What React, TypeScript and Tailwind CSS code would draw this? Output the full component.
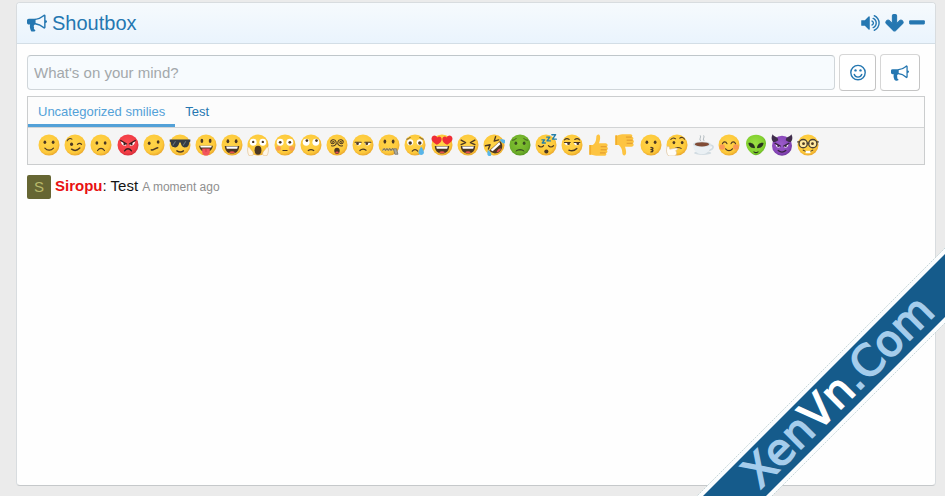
import { Fragment, type ReactNode } from "react";

/* ---------- interface icons ---------- */

const icons = {
  bullhorn: {
    box: "0 0 1792 1792",
    weight: 0,
    d: "M1664 640q53 0 90.5 37.5t37.5 90.5-37.5 90.5-90.5 37.5v384q0 52-38 90t-90 38q-417-347-812-380-58 19-91 66t-31 100.5 40 92.5q-20 33-23 65.5t6 58 33.5 55 48 50 61.5 50.5q-29 58-111.5 83t-168.5 11.5-132-55.5q-7-23-29.5-87.5t-32-94.5-23-89-15-101 3.5-98.5 22-110.5h-122q-66 0-113-47t-47-113v-192q0-66 47-113t113-47h480q435 0 896-384 52 0 90 38t38 90v384zm-128 604v-954q-394 302-768 343v270q377 42 768 341z",
  },
  volume: {
    box: "64 0 1664 1792",
    weight: 0,
    d: "M832 352v1088q0 26-19 45t-45 19-45-19l-333-333h-262q-26 0-45-19t-19-45v-384q0-26 19-45t45-19h262l333-333q19-19 45-19t45 19 19 45zm384 544q0 76-42.5 141.5t-112.5 93.5q-10 5-25 5-26 0-45-18.5t-19-45.5q0-21 12-35.5t29-25 34-23 29-36 12-56.5-12-56.5-29-36-34-23-29-25-12-35.5q0-27 19-45.5t45-18.5q15 0 25 5 70 27 112.5 93t42.5 142zm256 0q0 153-85 282.5t-225 188.5q-13 5-25 5-27 0-46-19t-19-45q0-39 39-59 56-29 76-44 74-54 115.5-135.5t41.5-173.5-41.5-173.5-115.5-135.5q-20-15-76-44-39-20-39-59 0-26 19-45t45-19q13 0 26 5 140 59 225 188.5t85 282.5zm256 0q0 230-127 422.5t-338 283.5q-13 5-26 5-26 0-45-19t-19-45q0-36 39-59 7-4 22.5-10.5t22.5-10.5q46-25 82-51 123-91 192-227t69-289-69-289-192-227q-36-26-82-51-7-4-22.5-10.5t-22.5-10.5q-39-23-39-59 0-26 19-45t45-19q13 0 26 5 211 91 338 283.5t127 422.5z",
  },
  down: {
    box: "64 0 1664 1792",
    weight: 90,
    d: "M1675 832q0 53-37 90l-651 652q-39 37-91 37-53 0-90-37l-651-652q-38-36-38-90 0-53 38-91l74-75q39-37 91-37 53 0 90 37l294 294v-704q0-52 38-90t90-38h128q52 0 90 38t38 90v704l294-294q37-37 90-37 52 0 91 37l75 75q37 39 37 91z",
  },
  minus: {
    box: "192 0 1408 1792",
    weight: 0,
    d: "M1600 736v192q0 40-28 68t-68 28h-1216q-40 0-68-28t-28-68v-192q0-40 28-68t68-28h1216q40 0 68 28t28 68z",
  },
};

function Icon({ name, className }: { name: keyof typeof icons; className: string }) {
  const { box, weight, d } = icons[name];
  return (
    <svg viewBox={box} className={className} fill="currentColor" stroke="currentColor" strokeWidth={weight} aria-hidden="true">
      <path d={d} />
    </svg>
  );
}

function SmileIcon() {
  return (
    <svg viewBox="0 0 18 18" className="size-[18px]" fill="none" stroke="currentColor" aria-hidden="true">
      <circle cx="9" cy="8.6" r="7.2" strokeWidth="1.4" />
      <circle cx="6.5" cy="6.4" r="1.2" fill="currentColor" stroke="none" />
      <circle cx="11.5" cy="6.4" r="1.2" fill="currentColor" stroke="none" />
      <path d="M5.2 10.3a4 4 0 0 0 7.6 0" strokeWidth="1.3" strokeLinecap="round" />
    </svg>
  );
}

/* ---------- smilies, all on a 64 unit grid ---------- */

const INK = "#4c3823";

function Face({ fill = "url(#faceYellow)" }: { fill?: string }) {
  return <circle cx="32" cy="32" r="30.5" fill={fill} />;
}

function Eyes({ y = 24, rx = 4, ry = 5 }: { y?: number; rx?: number; ry?: number }) {
  return (
    <g fill={INK}>
      <ellipse cx="20" cy={y} rx={rx} ry={ry} />
      <ellipse cx="44" cy={y} rx={rx} ry={ry} />
    </g>
  );
}

function BigEyes({ r = 10, pupil = 4, dx = 0, dy = 0 }: { r?: number; pupil?: number; dx?: number; dy?: number }) {
  return (
    <g>
      <circle cx="18" cy="24" r={r} fill="#fff" />
      <circle cx="46" cy="24" r={r} fill="#fff" />
      <circle cx={18 + dx} cy={24 + dy} r={pupil} fill={INK} />
      <circle cx={46 + dx} cy={24 + dy} r={pupil} fill={INK} />
    </g>
  );
}

function Line({ d, w = 3.5, color = INK }: { d: string; w?: number; color?: string }) {
  return <path d={d} fill="none" stroke={color} strokeWidth={w} strokeLinecap="round" strokeLinejoin="round" />;
}

function Grin() {
  return (
    <g>
      <path d="M11 35h42c0 13-8 22-21 22S11 48 11 35z" fill={INK} />
      <path d="M15 36h34l-2 7H17z" fill="#fff" />
      <path d="M23 53c6-4 12-4 18 0-5 4-13 4-18 0z" fill="#e8504f" />
    </g>
  );
}

const thumb = (
  <g>
    <path
      d="M4 32h10c6-5 10-12 10-22 0-10 10-11 11-3 1 7-1 14-3 20h19c7 0 8 9 3 10 5 1 5 9 0 10 4 2 3 8-2 9 3 2 1 7-4 7H24c-6 0-9-3-14-3H4z"
      fill="#fdc441"
    />
    <path d="M4 32h5v28H4z" fill="#f2ae2c" />
    <path d="M38 37h15M38 46h15M36 55h14" stroke="#d8902b" strokeWidth="2.5" strokeLinecap="round" />
  </g>
);

const smilies: [string, ReactNode][] = [
  ["Smile", <><Face /><Eyes /><Line d="M20 41c7 8 18 8 25 0" /></>],
  ["Wink", <><Face /><ellipse cx="22" cy="30" rx="4.5" ry="5" fill={INK} /><Line d="M39 30c4-4 9-4 12 0" /><Line d="M9 20c3-7 9-8 14-5" w={3} /><Line d="M22 44c8 6 17 4 24-3" w={4} /></>],
  ["Frown", <><Face /><Eyes y={26} /><Line d="M22 48c6-8 14-8 20 0" /></>],
  ["Mad", <><Face fill="url(#faceRed)" /><path d="M11 21l17 9c0 7-15 7-17-9zM53 21l-17 9c0 7 15 7 17-9z" fill="#fff" /><Line d="M11 19l17 10M53 19L36 29" w={4} color="#3a1d1f" /><circle cx="22" cy="29" r="3.5" fill="#3a1d1f" /><circle cx="42" cy="29" r="3.5" fill="#3a1d1f" /><Line d="M22 49c6-8 14-8 20 0" w={4} color="#3a1d1f" /></>],
  ["Confused", <><Face /><ellipse cx="18" cy="27" rx="4" ry="5" fill={INK} /><ellipse cx="44" cy="23" rx="4" ry="5" fill={INK} /><Line d="M24 46c6 3 10-5 19-6" w={4} /></>],
  ["Cool", <><Face /><path d="M2 16h60v6l-3 2c-1 11-5 15-13 15-9 0-11-9-12-14h-4c-1 5-3 14-12 14-8 0-12-4-13-15l-3-2z" fill="#353b41" /><path d="M11 33l8-12M41 33l8-12" stroke="#66717a" strokeWidth="3" /><Line d="M23 49c6 4 14 4 19 0" w={4} /></>],
  ["Stick out tongue", <><Face /><Eyes y={20} rx={4} ry={6} /><path d="M12 34h40c-1 11-8 18-20 18s-19-7-20-18z" fill={INK} /><path d="M15 34h34l-2 5H17z" fill="#fff" /><path d="M21 42h22v10c0 14-22 14-22 0z" fill="#f2555c" /><path d="M32 43v9" stroke="#c43a43" strokeWidth="2.5" /></>],
  ["Big grin", <><Face /><Eyes y={21} rx={4} ry={6} /><Grin /></>],
  ["Eek", <><Face /><BigEyes dy={-1} pupil={3.5} r={10} /><ellipse cx="32" cy="47" rx="10" ry="13" fill={INK} /><path d="M2 41c2-4 5-4 6 0l9 11c3 5 1 10-2 11H6C2 56 1 48 2 41zM62 41c-2-4-5-4-6 0l-9 11c-3 5-1 10 2 11h9c4-7 5-15 4-22z" fill="#fff6e6" stroke="#dcb57c" strokeWidth="1.5" /></>],
  ["Oops", <><Face /><circle cx="13" cy="42" r="7" fill="#f98c5c" opacity=".75" /><circle cx="51" cy="42" r="7" fill="#f98c5c" opacity=".75" /><BigEyes /><Line d="M26 48h12" /></>],
  ["Roll eyes", <><Face /><BigEyes dy={-5} dx={2} pupil={4} /><Line d="M24 48c5-3 11-3 16 0" /></>],
  ["Er... what?", <><Face /><Line d="M19 24c0-3 5-3 5 1s-9 6-10-1 11-11 15-2-6 15-13 12" w={3} /><Line d="M45 24c0-3-5-3-5 1s9 6 10-1-11-11-15-2 6 15 13 12" w={3} /><ellipse cx="32" cy="49" rx="8" ry="9" fill={INK} /><ellipse cx="32" cy="54" rx="5" ry="3" fill="#e8504f" /></>],
  ["Unamused", <><Face /><path d="M10 25h17c0 11-16 11-17 0zM37 25h17c-1 11-17 11-17 0z" fill="#fff" /><Line d="M9 24h18M37 24h18" w={3} /><circle cx="16" cy="28" r="4" fill={INK} /><circle cx="43" cy="28" r="4" fill={INK} /><Line d="M23 48c6-6 12-5 18-1" /></>],
  ["Zipped", <><Face /><Eyes y={22} rx={4} ry={6} /><Line d="M15 45h34" w={6} color="#c7b680" /><Line d="M14 47l4-5 4 6 4-6 4 6 4-6 4 6 4-6 4 5" w={2.5} color="#665f51" /><path d="M45 43h9l4 16h-9z" fill="#a9a99f" stroke="#6e6b60" strokeWidth="2" /></>],
  ["Crying", <><Face /><BigEyes r={9} pupil={5} dy={2} /><Line d="M8 15c4 0 8-2 10-5M56 15c-4 0-8-2-10-5" w={2.5} /><Line d="M24 50c5-6 11-6 16 0" /><path d="M50 36c6 9 8 13 8 18 0 9-16 9-16 0 0-5 3-9 8-18z" fill="#58b5e8" /></>],
  ["Love", <><Face /><path d="M17 31C4 24 0 17 2 11c3-9 13-8 16-1 4-5 13-3 13 5 0 7-6 12-14 16zM47 31c13-7 17-14 15-20-3-9-13-8-16-1-4-5-13-3-13 5 0 7 6 12 14 16z" fill="#ef2d35" /><Grin /></>],
  ["Laugh", <><Face /><Line d="M12 18l13 7-13 6M52 18l-13 7 13 6" w={4} /><Grin /></>],
  ["ROFL", <><g transform="rotate(-42 32 32)"><Face /><Line d="M12 17l12 7-12 6M52 17l-12 7 12 6" w={4} /><Grin /><path d="M9 31c-7 4-13 10-9 16 5 6 13 0 9-16zM55 31c7 4 13 10 9 16-5 6-13 0-9-16z" fill="#59b7eb" /></g></>],
  ["Sick", <><Face fill="url(#faceGreen)" /><g fill="#394d20"><ellipse cx="20" cy="27" rx="4" ry="5" /><ellipse cx="44" cy="27" rx="4" ry="5" /></g><Line d="M10 18c4 0 9-2 11-5M54 18c-4 0-9-2-11-5" w={2.5} color="#394d20" /><path d="M19 52c1-11 25-11 26 0-7-5-19-5-26 0z" fill="#394d20" /></>],
  ["Sleep", <><Face /><Line d="M10 34c4 5 11 5 15 0M39 34c4 5 11 5 15 0" /><ellipse cx="33" cy="51" rx="6" ry="6" fill={INK} /><Line d="M20 17h8l-7 9h9M34 9h9l-8 11h10M49 2h11L51 15h11" w={4} color="#247fa9" /></>],
  ["Smirk", <><Face /><path d="M10 26h17c0 9-15 9-17 0zM38 26h17c-2 9-17 9-17 0z" fill="#fff" /><Line d="M10 25h17M38 25h17M10 17c4-4 10-4 14-1M40 16c4-3 10-3 14 1" w={3} /><circle cx="22" cy="28" r="4" fill={INK} /><circle cx="49" cy="28" r="4" fill={INK} /><Line d="M23 47c9 4 17 1 23-5" w={4} /></>],
  ["Thumbs up", thumb],
  ["Thumbs down", <g transform="matrix(1 0 0 -1 0 64)">{thumb}</g>],
  ["Kiss", <><Face /><Eyes y={24} rx={4} ry={5} /><Line d="M32 39c8 0 7 6 0 6 8 0 7 7 0 7" w={4} /></>],
  ["Thinking", <><Face /><ellipse cx="23" cy="25" rx="4" ry="5" fill={INK} /><ellipse cx="47" cy="25" rx="4" ry="5" fill={INK} /><Line d="M14 16c4-5 10-5 14-2M40 12c5-4 11-2 14 3M27 41c6-3 11-3 17 1" w={3} /><path d="M3 37c4-3 7 0 8 7l18-3c6-1 6 5 1 6l-2 2c5 5 3 13-4 15H8C1 59 0 46 3 37z" fill="#fffdf8" stroke="#dcc09a" strokeWidth="2" /></>],
  ["Coffee", <><Line d="M25 19c-7-6 4-8-1-14M35 19c-7-6 4-8-1-14" w={3} color="#b5bdc1" /><path d="M47 35c17-7 20 7 2 13" fill="none" stroke="#d2dce2" strokeWidth="5" /><ellipse cx="31" cy="55" rx="25" ry="6" fill="#d2dce2" /><path d="M3 30h51c0 17-9 29-25 29S3 47 3 30z" fill="#eaf0f4" /><ellipse cx="29" cy="30" rx="26" ry="8" fill="#d5dfe4" /><ellipse cx="29" cy="30" rx="21" ry="6" fill="#804c36" /></>],
  ["Blush", <><Face /><circle cx="12" cy="38" r="8" fill="#f98c5c" opacity=".8" /><circle cx="52" cy="38" r="8" fill="#f98c5c" opacity=".8" /><Line d="M13 28c3-7 10-7 13 0M38 28c3-7 10-7 13 0M22 43c6 7 14 7 20 0" /></>],
  ["Alien", <><path d="M32 2c18 0 29 12 29 25 0 18-18 35-29 35S3 45 3 27C3 14 14 2 32 2z" fill="url(#faceLime)" /><path d="M10 26c10-2 19 5 19 15-10 1-18-5-19-15zM54 26c-10-2-19 5-19 15 10 1 18-5 19-15z" fill="#29331f" /><Line d="M26 52c4 3 8 3 12 0" w={3} color="#29331f" /></>],
  ["Devil", <><circle cx="32" cy="34" r="29" fill="url(#facePurple)" /><path d="M5 1c2 8 15 5 16 17-5 4-10 6-15 5C0 16 1 7 5 1zM59 1c-2 8-15 5-16 17 5 4 10 6 15 5 6-7 5-16 1-22z" fill="#3f2c4b" /><path d="M13 28l14 8c-2 6-13 4-14-8zM51 28l-14 8c2 6 13 4 14-8z" fill="#fff" /><Line d="M12 27l15 8M52 27l-15 8M21 48c7 6 15 6 22 0" w={4} color="#392345" /><circle cx="21" cy="35" r="3" fill="#392345" /><circle cx="43" cy="35" r="3" fill="#392345" /></>],
  ["Geek", <><Face /><g fill="#ffe9a0" stroke="#4b4236" strokeWidth="4"><circle cx="18" cy="28" r="12" /><circle cx="46" cy="28" r="12" /></g><Line d="M30 27h4M2 23h5M57 23h5" w={4} color="#4b4236" /><circle cx="19" cy="28" r="4" fill={INK} /><circle cx="45" cy="28" r="4" fill={INK} /><Line d="M18 47c9 6 19 6 28 0" w={3} /><path d="M25 49h14v7H25z" fill="#fff" /></>],
];

function SmileyPaints() {
  const paints = [
    ["faceYellow", "#ffd549", "#fdc93b", "#e9a52b"],
    ["faceRed", "#fa4d52", "#f23c45", "#cf2c37"],
    ["faceGreen", "#84c431", "#6fb02a", "#55931f"],
    ["faceLime", "#9be045", "#82d02f", "#62ab22"],
    ["facePurple", "#9b5cca", "#8847b8", "#6d349b"],
  ];
  return (
    <svg className="absolute size-0" aria-hidden="true">
      <defs>
        {paints.map(([id, a, b, c]) => (
          <radialGradient key={id} id={id} cx="45%" cy="42%" r="60%">
            <stop offset="0" stopColor={a} />
            <stop offset=".75" stopColor={b} />
            <stop offset="1" stopColor={c} />
          </radialGradient>
        ))}
      </defs>
    </svg>
  );
}

/* ---------- corner ribbon ---------- */

function Ribbon() {
  return (
    <svg viewBox="0 0 256 256" className="pointer-events-none absolute right-0 bottom-0 size-64">
      <path d="M256 8v75L83 256H8z" fill="#fbfdfe" />
      <path d="M256 8L8 256M256 83L83 256" stroke="#b5c8cb" strokeWidth=".7" strokeDasharray="2 1" />
      <path d="M256 14v63L77 256H14z" fill="#155b8b" />
      <text
        transform="translate(71 250) rotate(-45)"
        fontFamily="'DejaVu Sans', sans-serif"
        fontSize="43"
        fill="#a5cdec"
        stroke="#a5cdec"
        strokeWidth="1.5"
      >
        Xen
        <tspan fill="#fff" stroke="#fff">Vn</tspan>
        .Com
      </text>
    </svg>
  );
}

/* ---------- page ---------- */

const iconButton =
  "flex h-[37px] items-center justify-center rounded-[4px] border border-[#d6d6d6] border-r-[#c4c4c4] border-b-[#c4c4c4] bg-white text-[#2577b1]";

export default function App() {
  return (
    <div className="relative flex min-h-screen flex-col overflow-hidden bg-[#ebebeb] pt-0.5 pr-[9px] pb-2.5 pl-4 font-['Liberation_Sans',Arial,sans-serif] text-[15px] text-[#141414]">
      <SmileyPaints />
      <section className="flex-1 rounded-[4px] border border-[#d8dcdf] border-b-[#c5c8ca] bg-[#fefefe]">
        <header className="flex h-[41px] items-center justify-between rounded-t-[3px] border-b border-[#d3dee6] bg-linear-to-b from-[#f6fafd] to-[#eaf4fd] px-2.5 text-[#2577b1]">
          <h1 className="flex items-center gap-[5px] text-xl">
            <Icon name="bullhorn" className="size-5" />
            Shoutbox
          </h1>
          <div className="flex gap-[5px]">
            <button type="button" aria-label="Toggle sound">
              <Icon name="volume" className="h-5 w-[19px]" />
            </button>
            <button type="button" aria-label="Reverse order">
              <Icon name="down" className="h-5 w-[19px]" />
            </button>
            <button type="button" aria-label="Collapse">
              <Icon name="minus" className="h-5 w-4" />
            </button>
          </div>
        </header>

        <div className="p-2.5">
          <form className="flex items-center gap-1 pr-[5px]" onSubmit={(e) => e.preventDefault()}>
            <input
              type="text"
              aria-label="Shout"
              placeholder="What's on your mind?"
              className="h-[35px] min-w-0 flex-1 rounded-[4px] border border-[#d0d6da] border-t-[#bfc6ca] bg-[#f7fbfe] px-1.5 placeholder:text-[#a3a8ab]"
            />
            <button type="button" aria-label="Smilies" className={`${iconButton} w-[37px]`}>
              <SmileIcon />
            </button>
            <button type="submit" aria-label="Shout!" className={`${iconButton} w-10`}>
              <Icon name="bullhorn" className="size-[18px]" />
            </button>
          </form>

          <div className="mt-[5px] border border-[#cbcdce]">
            <div role="tablist" className="flex border-b border-[#d2d4d5] bg-[#fcfcfc] text-[13px] leading-[25px]">
              <button type="button" role="tab" aria-selected="true" className="border-b-[3px] border-[#53a1d8] px-2.5 pt-0.5 text-[#53a1d8]">
                Uncategorized smilies
              </button>
              <button type="button" role="tab" aria-selected="false" className="border-b-[3px] border-transparent px-2.5 pt-0.5 text-[#2577b1]">
                Test
              </button>
            </div>
            <div role="tabpanel" className="bg-[#f5f5f5] px-2.5 pt-1.5 pb-2 leading-[22px]">
              {smilies.map(([name, art]) => (
                <Fragment key={name}>
                  <button type="button" aria-label={name} className="inline-block size-[22px] align-top">
                    <svg viewBox="0 0 64 64" className="size-[22px]" aria-hidden="true">
                      {art}
                    </svg>
                  </button>{" "}
                </Fragment>
              ))}
            </div>
          </div>

          <div className="mt-2.5 flex gap-1">
            <span className="flex size-6 items-center justify-center rounded-[2px] bg-[#666633] text-[#b9b96b]">
              S
            </span>
            <p className="leading-[22px]">
              <a href="#siropu" className="font-bold text-[#e81111]">Siropu</a>: Test{" "}
              <time className="text-xs text-[#8f8f8f]">A moment ago</time>
            </p>
          </div>
        </div>
      </section>
      <Ribbon />
    </div>
  );
}
